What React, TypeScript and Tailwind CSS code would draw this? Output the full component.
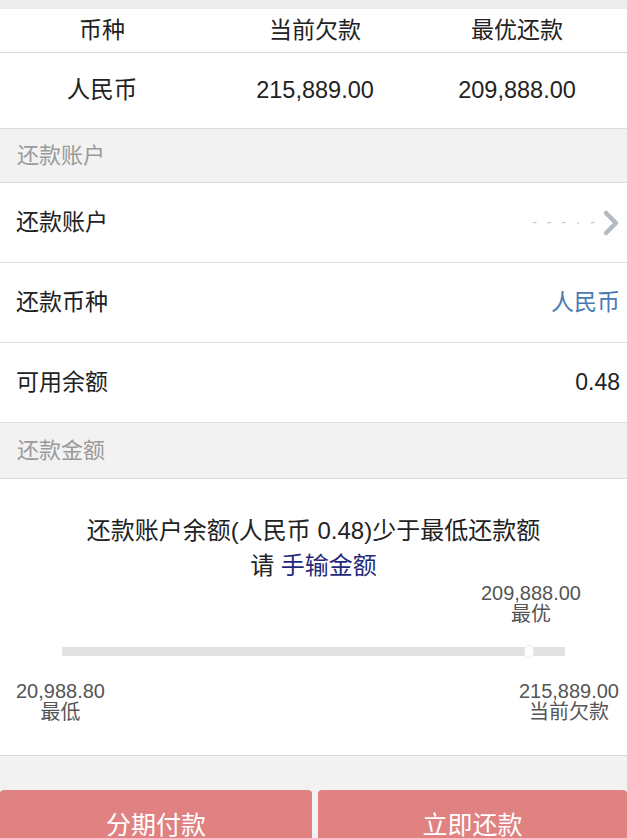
const font = { fontFamily: '"Liberation Sans", "Noto Sans CJK SC", sans-serif' };

function Row({ label, children }: { label: string; children?: React.ReactNode }) {
  return (
    <div className="flex h-20 items-center justify-between border-b border-[#dedede] bg-white pl-4 pr-[7px]">
      <span className="text-[23px] text-[#222]">{label}</span>
      {children}
    </div>
  );
}

function Section({ title, h }: { title: string; h: string }) {
  return (
    <div className={`flex items-center border-b border-[#dedede] bg-[#f2f2f2] pl-[17px] ${h}`}>
      <span className="text-[22px] text-[#9a9a9a]">{title}</span>
    </div>
  );
}

export default function App() {
  return (
    <div className="h-[838px] w-[627px] overflow-hidden bg-[#f2f2f2]" style={font}>
      <div className="h-[9px] bg-[#ececec]" />
      <div className="grid h-[44px] grid-cols-[204px_222px_182px] items-center border-b border-[#d6d6d6] bg-white text-center text-[23px] text-[#222]">
        <span>币种</span>
        <span>当前欠款</span>
        <span>最优还款</span>
      </div>
      <div className="grid h-[76px] grid-cols-[204px_222px_182px] items-center border-b border-[#dedede] bg-white text-center text-[23.5px] text-[#222]">
        <span>人民币</span>
        <span>215,889.00</span>
        <span>209,888.00</span>
      </div>
      <Section title="还款账户" h="h-[54px]" />
      <Row label="还款账户">
        <div className="flex items-center gap-1">
          <span className="tracking-[3px] text-[14px] text-[#c4c4c4]">- - - · -</span>
          <svg width="18" height="30" viewBox="0 0 18 30" fill="none">
            <path d="M4 5 L14 15 L4 25" stroke="#b3bac3" strokeWidth="4.5" strokeLinecap="round" strokeLinejoin="round" />
          </svg>
        </div>
      </Row>
      <Row label="还款币种">
        <span className="text-[23px] text-[#4b79b3]">人民币</span>
      </Row>
      <Row label="可用余额">
        <span className="text-[23px] text-[#222]">0.48</span>
      </Row>
      <Section title="还款金额" h="h-[56px]" />
      <div className="flex h-[277px] flex-col border-b border-[#d6d6d6] bg-white">
        <div className="mt-[34px] text-center text-[24px] leading-[36px] text-[#222]">
          还款账户余额(人民币 0.48)少于最低还款额
        </div>
        <div className="text-center text-[24px] leading-[34px] text-[#222]">
          请 <span className="text-[#1f2a7a]">手输金额</span>
        </div>
        <div className="flex justify-end pr-[46px]">
          <div className="flex flex-col items-center text-[20px] leading-[21px] text-[#555]">
            <span>209,888.00</span>
            <span>最优</span>
          </div>
        </div>
        <div className="relative mx-[62px] mt-[22px] h-[9px] bg-[#e2e2e2]">
          <div className="absolute left-[462px] top-[-2px] h-[13px] w-[10px] rounded-full border border-[#eeeeee] bg-white" />
        </div>
        <div className="mt-[25px] flex items-start justify-between pl-4 pr-2 text-[20px] leading-[21px] text-[#555]">
          <div className="flex flex-col items-center">
            <span>20,988.80</span>
            <span>最低</span>
          </div>
          <div className="flex flex-col items-center">
            <span>215,889.00</span>
            <span>当前欠款</span>
          </div>
        </div>
      </div>
      <div className="mt-[34px] flex gap-[6px]">
        <button className="flex h-[60px] w-[312px] items-start justify-center rounded-t-[4px] bg-[#e08282] pt-[17px] text-[25px] text-white">
          分期付款
        </button>
        <button className="flex h-[60px] flex-1 items-start justify-center rounded-t-[4px] bg-[#e08282] pt-[17px] text-[25px] text-white">
          立即还款
        </button>
      </div>
    </div>
  );
}
